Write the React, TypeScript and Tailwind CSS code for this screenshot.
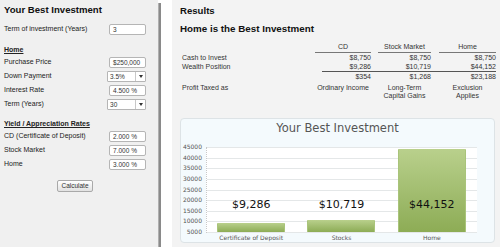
import React from "react";

const sans = { fontFamily: '"Liberation Sans", Arial, sans-serif' };

function TextInput({ value }: { value: string }) {
  return (
    <div className="w-[37px] h-[11px] bg-white border border-[#b5b5b5] rounded-[2px] pl-[3px] text-[6.5px] leading-[9px] text-[#333]">
      {value}
    </div>
  );
}

function SelectBox({ value }: { value: string }) {
  return (
    <div className="w-[39px] h-[11px] bg-white border border-[#b5b5b5] rounded-[1px] flex text-[6.5px] leading-[9px] text-[#333]">
      <div className="flex-1 pl-[2px]">{value}</div>
      <div className="w-[10px] border-l border-[#c8c8c8] flex items-center justify-center">
        <div className="w-0 h-0 border-l-[2px] border-r-[2px] border-t-[3px] border-l-transparent border-r-transparent border-t-[#333]" />
      </div>
    </div>
  );
}

function Row({ label, children }: { label: string; children: React.ReactNode }) {
  return (
    <div className="h-[14px] flex items-center justify-between pr-[12px]">
      <span className="text-[7px] text-[#222]">{label}</span>
      {children}
    </div>
  );
}

const bars = [
  { label: "Certificate of Deposit", value: 9286 },
  { label: "Stocks", value: 10719 },
  { label: "Home", value: 44152 },
];
const ticks = ["45000", "40000", "35000", "30000", "25000", "20000", "15000", "10000", "5000"];

export default function App() {
  return (
    <div className="w-[500px] h-[247px] flex overflow-hidden bg-white" style={sans}>
      {/* left panel */}
      <div className="w-[159px] h-full bg-[#f0f0f0] pl-[4px] pt-[4px] flex flex-col">
        <div className="h-[12px] leading-[12px] text-[9.6px] font-bold text-[#111]">Your Best Investment</div>
        <div className="mt-[6px]">
          <Row label="Term of investment (Years)">
            <TextInput value="3" />
          </Row>
        </div>
        <div className="mt-[9px] h-[10px] leading-[10px] text-[7px] font-bold underline text-[#222]">Home</div>
        <Row label="Purchase Price">
          <TextInput value="$250,000" />
        </Row>
        <Row label="Down Payment">
          <SelectBox value="3.5%" />
        </Row>
        <Row label="Interest Rate">
          <TextInput value="4.500 %" />
        </Row>
        <Row label="Term (Years)">
          <SelectBox value="30" />
        </Row>
        <div className="mt-[8px] h-[10px] leading-[10px] text-[7px] font-bold underline text-[#222]">
          Yield / Appreciation Rates
        </div>
        <Row label="CD (Certificate of Deposit)">
          <TextInput value="2.000 %" />
        </Row>
        <Row label="Stock Market">
          <TextInput value="7.000 %" />
        </Row>
        <Row label="Home">
          <TextInput value="3.000 %" />
        </Row>
        <div className="mt-[9px] ml-[53px] w-[36px] h-[12px] rounded-[2px] border border-[#a9a9a9] bg-gradient-to-b from-white to-[#e2e2e2] text-[6.5px] leading-[10px] text-center text-[#333]">
          Calculate
        </div>
      </div>

      {/* divider */}
      <div className="w-[3px] h-full pt-[3px] bg-white">
        <div className="w-full h-full bg-[#8a8a8a] border-l border-[#b0b0b0]" />
      </div>
      <div className="w-[11px] h-full bg-white" />

      {/* right panel */}
      <div className="flex-1 h-full bg-[#f3f3f3] pl-[8px] pr-[4px] pt-[4px] flex flex-col">
        <div className="h-[13px] leading-[13px] text-[9.6px] font-bold text-[#111]">Results</div>
        <div className="mt-[5px] h-[13px] leading-[13px] text-[9.8px] font-bold text-[#111]">Home is the Best Investment</div>

        {/* table */}
        <div className="mt-[7px] text-[7px] text-[#333]">
          <div className="flex h-[11px]">
            <div className="w-[135px]" />
            <div className="w-[56px] border-b border-[#777] text-center leading-[10px]">CD</div>
            <div className="w-[7px]" />
            <div className="w-[53px] border-b border-[#777] text-center leading-[10px]">Stock Market</div>
            <div className="w-[8px]" />
            <div className="w-[57px] border-b border-[#777] text-center leading-[10px]">Home</div>
          </div>
          {[
            ["Cash to Invest", "$8,750", "$8,750", "$8,750"],
            ["Wealth Position", "$9,286", "$10,719", "$44,152"],
          ].map((r) => (
            <div key={r[0]} className="flex h-[9px] leading-[9px]">
              <div className="w-[135px] pl-[2px]">{r[0]}</div>
              <div className="w-[56px] text-right">{r[1]}</div>
              <div className="w-[7px]" />
              <div className="w-[53px] text-right">{r[2]}</div>
              <div className="w-[8px]" />
              <div className="w-[57px] text-right">{r[3]}</div>
            </div>
          ))}
          <div className="ml-[142px] w-[174px] h-px bg-[#555]" />
          <div className="flex h-[10px] leading-[10px]">
            <div className="w-[135px]" />
            <div className="w-[56px] text-right">$354</div>
            <div className="w-[7px]" />
            <div className="w-[53px] text-right">$1,268</div>
            <div className="w-[8px]" />
            <div className="w-[57px] text-right">$23,188</div>
          </div>
          <div className="mt-[2px] flex leading-[8px]">
            <div className="w-[135px] pl-[2px]">Profit Taxed as</div>
            <div className="w-[56px] text-center">Ordinary Income</div>
            <div className="w-[7px]" />
            <div className="w-[53px] text-center">
              Long-Term
              <br />
              Capital Gains
            </div>
            <div className="w-[8px]" />
            <div className="w-[57px] text-center">
              Exclusion
              <br />
              Applies
            </div>
          </div>
        </div>

        {/* chart */}
        <div
          className="mt-[18px] w-[315px] h-[125px] rounded-[4px] border border-[#dde3e6] bg-[#f4fafd] flex flex-col"
          style={{ fontFamily: '"DejaVu Sans", Verdana, sans-serif' }}
        >
          <div className="mt-[2px] h-[14px] leading-[14px] text-center text-[11.5px] text-[#555]">Your Best Investment</div>
          <div className="mt-[8px] flex">
            <div className="w-[21px] h-[93px] flex flex-col justify-between items-end text-[6px] text-[#555]">
              {ticks.map((t) => (
                <div key={t} className="h-[8px] leading-[8px]">
                  {t}
                </div>
              ))}
            </div>
            <div className="ml-[4px] w-[271px] flex flex-col">
              <div className="mt-[4px] grid h-[86px]">
                <div className="col-start-1 row-start-1 bg-white border-l border-dotted border-[#c8c8c8] flex flex-col justify-between">
                  {ticks.map((t) => (
                    <div key={t} className="h-px bg-[#e4e7e8]" />
                  ))}
                </div>
                <div className="col-start-1 row-start-1 flex items-end pb-[1px]">
                  {bars.map((b) => (
                    <div key={b.label} className="flex-1 flex justify-center">
                      <div
                        className="w-[68px] rounded-t-[1px] bg-gradient-to-b from-[#b9d08c] to-[#8dac55] border-x border-[#a9c47a]"
                        style={{ height: `${((b.value - 5000) / 40000) * 85}px` }}
                      />
                    </div>
                  ))}
                </div>
                <div className="col-start-1 row-start-1 flex pt-[51px]">
                  {bars.map((b) => (
                    <div key={b.label} className="flex-1 text-center text-[11px] leading-[13px] text-[#111]">
                      ${b.value.toLocaleString("en-US")}
                    </div>
                  ))}
                </div>
              </div>
              <div className="mt-[1px] flex h-[8px] leading-[8px] text-[6px] text-[#555]">
                {bars.map((b) => (
                  <div key={b.label} className="flex-1 text-center">
                    {b.label}
                  </div>
                ))}
              </div>
            </div>
          </div>
        </div>
      </div>
    </div>
  );
}
